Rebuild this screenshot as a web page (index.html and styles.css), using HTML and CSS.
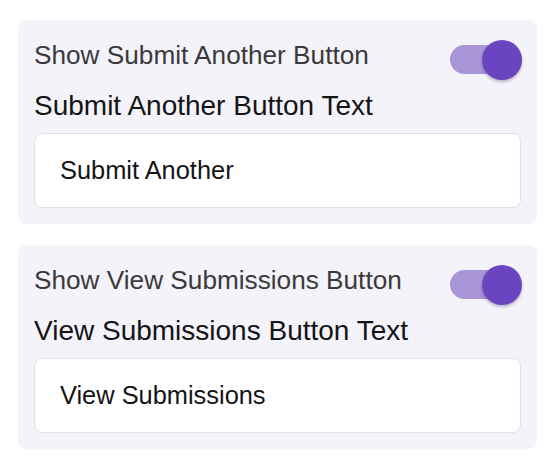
FILE: index.html
```html
<!DOCTYPE html>
<html>
<head>
<meta charset="utf-8">
<link rel="stylesheet" href="styles.css">
</head>
<body>
<div class="page">
  <section class="card">
    <div class="row">
      <span class="label">Show Submit Another Button</span>
      <div class="switch"><span class="track"></span><span class="thumb"></span></div>
    </div>
    <div class="field-label">Submit Another Button Text</div>
    <div class="input">Submit Another</div>
  </section>
  <section class="card">
    <div class="row">
      <span class="label">Show View Submissions Button</span>
      <div class="switch"><span class="track"></span><span class="thumb"></span></div>
    </div>
    <div class="field-label">View Submissions Button Text</div>
    <div class="input">View Submissions</div>
  </section>
</div>
</body>
</html>
```

FILE: styles.css
```css
* { box-sizing: border-box; }
html, body { margin: 0; padding: 0; background: #ffffff; }
body { font-family: "Liberation Sans", Arial, sans-serif; }
.page {
  width: 558px;
  padding: 20px 21px 0 18px;
  display: flex;
  flex-direction: column;
  gap: 21px;
}
.card {
  background: #f4f3f9;
  border-radius: 8px;
  padding: 20px 16px 16px 16px;
  display: flex;
  flex-direction: column;
}
.row {
  display: flex;
  justify-content: space-between;
  align-items: flex-start;
  height: 40px;
}
.label {
  font-size: 26.2px;
  line-height: 30px;
  color: #3a3a3d;
}
.switch {
  position: relative;
  width: 72px;
  height: 40px;
  margin-right: -1px;
}
.track {
  position: absolute;
  left: 0;
  top: 5px;
  width: 66px;
  height: 29px;
  border-radius: 15px;
  background: #a795d7;
}
.thumb {
  position: absolute;
  right: 0;
  top: 0;
  width: 40px;
  height: 40px;
  border-radius: 50%;
  background: #6b45bf;
  box-shadow: 0 2px 3px rgba(40, 20, 80, 0.28);
}
.field-label {
  margin-top: 11px;
  font-size: 28px;
  line-height: 30px;
  color: #141416;
}
.input {
  margin-top: 12px;
  height: 75px;
  background: #ffffff;
  border: 1.5px solid #e3e1e7;
  border-radius: 8px;
  padding-left: 25px;
  display: flex;
  align-items: center;
  font-size: 25.4px;
  color: #141416;
}
```
